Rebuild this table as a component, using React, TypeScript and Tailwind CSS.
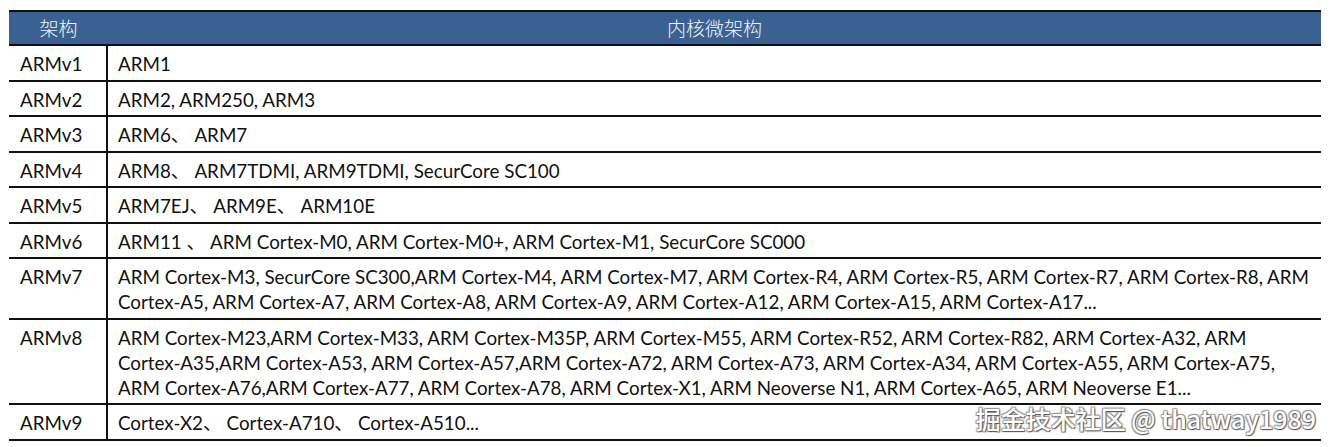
const rows: { arch: string; lines: string[] }[] = [
  { arch: 'ARMv1', lines: ['ARM1'] },
  { arch: 'ARMv2', lines: ['ARM2, ARM250, ARM3'] },
  { arch: 'ARMv3', lines: ['ARM6、 ARM7'] },
  { arch: 'ARMv4', lines: ['ARM8、 ARM7TDMI, ARM9TDMI, SecurCore SC100'] },
  { arch: 'ARMv5', lines: ['ARM7EJ、 ARM9E、 ARM10E'] },
  { arch: 'ARMv6', lines: ['ARM11 、 ARM Cortex-M0, ARM Cortex-M0+, ARM Cortex-M1, SecurCore SC000'] },
  {
    arch: 'ARMv7',
    lines: [
      'ARM Cortex-M3, SecurCore SC300,ARM Cortex-M4, ARM Cortex-M7, ARM Cortex-R4, ARM Cortex-R5, ARM Cortex-R7, ARM Cortex-R8, ARM',
      'Cortex-A5, ARM Cortex-A7, ARM Cortex-A8, ARM Cortex-A9, ARM Cortex-A12, ARM Cortex-A15, ARM Cortex-A17...',
    ],
  },
  {
    arch: 'ARMv8',
    lines: [
      'ARM Cortex-M23,ARM Cortex-M33, ARM Cortex-M35P, ARM Cortex-M55, ARM Cortex-R52, ARM Cortex-R82, ARM Cortex-A32, ARM',
      'Cortex-A35,ARM Cortex-A53, ARM Cortex-A57,ARM Cortex-A72, ARM Cortex-A73, ARM Cortex-A34, ARM Cortex-A55, ARM Cortex-A75,',
      'ARM Cortex-A76,ARM Cortex-A77, ARM Cortex-A78, ARM Cortex-X1, ARM Neoverse N1, ARM Cortex-A65, ARM Neoverse E1...',
    ],
  },
  { arch: 'ARMv9', lines: ['Cortex-X2、 Cortex-A710、 Cortex-A510...'] },
]

export default function App() {
  return (
    <div className="relative w-[1331px] h-[447px] bg-white pt-[10px] pl-[9px] font-['Lato','Noto_Sans_CJK_SC',sans-serif] text-[#111]">
      <div className="w-[1312px]">
        {/* Header */}
        <div className="grid grid-cols-[99px_1fr] h-[36px] bg-[#3a6191] border-y-2 border-[#111] text-[#f2f4f8] font-['Noto_Sans_CJK_SC',sans-serif] font-light text-[19px] leading-[32px]">
          <div className="text-center">架构</div>
          <div className="text-center">内核微架构</div>
        </div>

        {/* Body */}
        {rows.map((row) => (
          <div key={row.arch} className="grid grid-cols-[99px_1fr] border-b-2 border-[#111] text-[18.8px] leading-[25px]">
            <div className="border-r-2 border-[#111] pl-[11px] pt-[5px] pb-[3.5px]">{row.arch}</div>
            <div className="pl-[10px] pt-[5px] pb-[3.5px]">
              {row.lines.map((line, i) => (
                <div key={i} className="whitespace-nowrap">
                  {line}
                </div>
              ))}
            </div>
          </div>
        ))}
      </div>

      {/* Watermark */}
      <div className="absolute right-[15px] top-[402px] text-[25px] leading-[32px] text-white font-['Noto_Sans_CJK_SC',sans-serif] font-medium [text-shadow:1px_1px_1px_#555,-1px_-1px_1px_#999,1px_-1px_1px_#999,-1px_1px_1px_#999]">
        掘金技术社区 @ thatway1989
      </div>
    </div>
  )
}
